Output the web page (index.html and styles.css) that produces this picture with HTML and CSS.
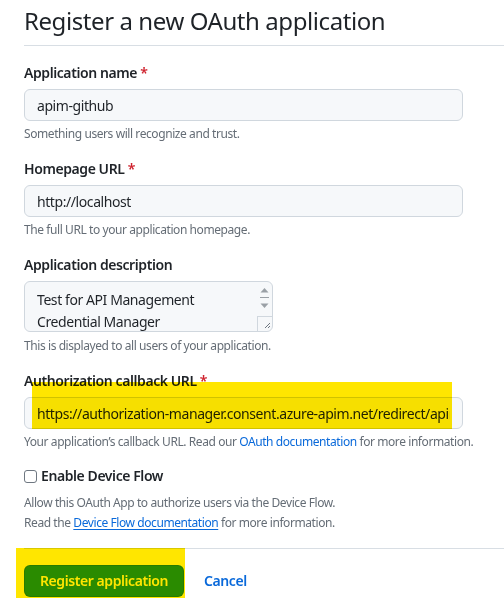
FILE: index.html
```html
<!DOCTYPE html>
<html lang="en">
<head>
<meta charset="utf-8">
<title>Register a new OAuth application</title>
<link rel="stylesheet" href="styles.css">
</head>
<body>
<div class="page">
  <div class="header">
    <h1 class="title">Register a new OAuth application</h1>
  </div>
  <form class="form">
    <div class="group">
      <label class="label">Application name <span class="req">*</span></label>
      <input class="control" type="text" value="apim-github" readonly>
      <p class="note">Something users will recognize and trust.</p>
    </div>
    <div class="group">
      <label class="label">Homepage URL <span class="req">*</span></label>
      <input class="control" type="text" value="http://localhost" readonly>
      <p class="note">The full URL to your application homepage.</p>
    </div>
    <div class="group">
      <label class="label label-desc">Application description</label>
      <div class="textarea">
        <div class="textarea-text">Test for API Management<br>Credential Manager</div>
        <div class="scrollbar">
          <svg width="15" height="49" viewBox="0 0 15 49">
            <polygon points="3.5,10.5 11.5,10.5 7.5,6" fill="#9aa0a6"/>
            <line x1="3" y1="15.5" x2="12" y2="15.5" stroke="#9aa0a6" stroke-width="1"/>
            <polygon points="3.5,21.5 11.5,21.5 7.5,26" fill="#9aa0a6"/>
            <line x1="0.5" y1="34" x2="0.5" y2="49" stroke="#d0d7de" stroke-width="1"/>
            <line x1="0" y1="34.5" x2="15" y2="34.5" stroke="#d0d7de" stroke-width="1"/>
            <line x1="13" y1="41" x2="8" y2="46" stroke="#6e7781" stroke-width="1"/>
            <line x1="13" y1="44" x2="11" y2="46" stroke="#6e7781" stroke-width="1"/>
          </svg>
        </div>
      </div>
      <p class="note note-desc">This is displayed to all users of your application.</p>
    </div>
    <div class="group group-callback">
      <label class="label">Authorization callback URL <span class="req">*</span></label>
      <input class="control" type="text" value="https://authorization-manager.consent.azure-apim.net/redirect/apim/apim-github" readonly>
      <p class="note">Your application’s callback URL. Read our <a class="link" href="#">OAuth documentation</a> for more information.</p>
      <div class="highlight highlight-url"></div>
    </div>
    <div class="group-check">
      <label class="check-label"><input class="checkbox" type="checkbox"> Enable Device Flow</label>
      <p class="note note-tall note-first">Allow this OAuth App to authorize users via the Device Flow.</p>
      <p class="note note-tall">Read the <a class="link link-underline" href="#">Device Flow documentation</a> for more information.</p>
    </div>
    <div class="actions">
      <button class="btn-primary" type="button">Register application</button>
      <a class="btn-cancel" href="#">Cancel</a>
      <div class="highlight highlight-btn"></div>
    </div>
  </form>
</div>
</body>
</html>
```

FILE: styles.css
```css
html, body {
  margin: 0;
  padding: 0;
  background: #ffffff;
}

body {
  font-family: "Noto Sans", "Open Sans", sans-serif;
  color: #1f2328;
  font-size: 14px;
  line-height: 20px;
  letter-spacing: -0.03em;
}

.page {
  padding-left: 24px;
  width: 480px;
}

.header {
  padding-top: 3px;
  padding-bottom: 6px;
  border-bottom: 1px solid #d8dee4;
}

.title {
  margin: 0;
  font-size: 24px;
  line-height: 36px;
  font-weight: 400;
  color: #1f2328;
}

.form {
  padding-top: 17px;
  margin: 0;
}

.group {
  margin-bottom: 16px;
  position: relative;
}

.group-callback {
  margin-bottom: 15px;
}

.label {
  display: block;
  font-size: 14px;
  line-height: 20px;
  font-weight: 600;
  margin-bottom: 6px;
}

.req {
  color: #cf222e;
}

.control {
  display: block;
  box-sizing: border-box;
  width: 439px;
  height: 32px;
  margin: 0;
  padding: 5px 12px;
  font-family: "Noto Sans", "Open Sans", sans-serif;
  font-size: 14px;
  line-height: 20px;
  letter-spacing: -0.03em;
  color: #1f2328;
  background: #f6f8fa;
  border: 1px solid #d0d7de;
  border-radius: 6px;
  outline: none;
}

.note {
  margin: 4px 0 0;
  font-size: 12px;
  line-height: 18px;
  color: #656d76;
  white-space: nowrap;
}

.note-desc {
  margin-top: 5px;
}

.textarea {
  box-sizing: border-box;
  width: 249px;
  height: 51px;
  display: flex;
  background: #f6f8fa;
  border: 1px solid #d0d7de;
  border-radius: 6px;
  overflow: hidden;
}

.textarea-text {
  flex: 1;
  padding: 7px 12px 0;
  font-size: 14px;
  line-height: 22px;
  white-space: nowrap;
  overflow: hidden;
}

.scrollbar {
  width: 15px;
  display: flex;
  flex-direction: column;
}

.scrollbar svg {
  display: block;
}

.link {
  color: #0969da;
  text-decoration: none;
}

.link-underline {
  text-decoration: underline;
  text-underline-offset: 2px;
}

.group-check {
  margin-bottom: 15px;
}

.check-label {
  display: flex;
  align-items: center;
  gap: 4px;
  font-size: 14px;
  line-height: 20px;
  font-weight: 600;
}

.checkbox {
  appearance: none;
  -webkit-appearance: none;
  box-sizing: border-box;
  width: 13px;
  height: 13px;
  margin: 0;
  border: 1px solid #6e7781;
  border-radius: 3px;
  background: #ffffff;
}

.note-tall {
  margin: 0;
  line-height: 20px;
}

.note-first {
  margin-top: 7px;
}

.actions {
  position: relative;
  border-top: 1px solid #d8dee4;
  padding-top: 16px;
  padding-bottom: 13px;
  display: flex;
  align-items: center;
}

.btn-primary {
  box-sizing: border-box;
  width: 160px;
  height: 32px;
  padding: 0 10px;
  white-space: nowrap;
  font-family: "Noto Sans", "Open Sans", sans-serif;
  font-size: 14px;
  font-weight: 600;
  line-height: 20px;
  letter-spacing: -0.03em;
  color: #ffffff;
  background: #2a9a45;
  border: 1px solid rgba(27, 31, 36, 0.15);
  border-radius: 6px;
}

.btn-cancel {
  margin-left: 20px;
  font-size: 14px;
  font-weight: 600;
  color: #0969da;
  text-decoration: none;
}

.highlight {
  position: absolute;
  background: #ffe600;
  mix-blend-mode: multiply;
  pointer-events: none;
}

.highlight-url {
  left: 8px;
  top: 11px;
  width: 420px;
  height: 47px;
}

.highlight-btn {
  left: -8px;
  top: -1px;
  width: 169px;
  height: 50px;
}
```
